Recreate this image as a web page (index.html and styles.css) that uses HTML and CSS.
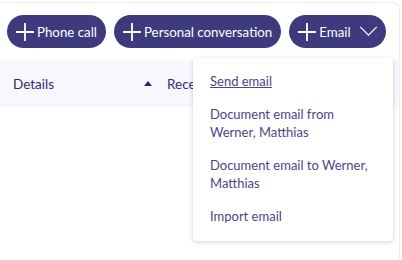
FILE: index.html
```html
<html>
<head>
<meta charset="utf-8" />
<link rel="stylesheet" href="styles.css">
</head>
<body>
    <div class="panel">
        <div class="actions">
            <button class="pill">
                <svg class="plus" viewBox="0 0 20 20"><path d="M10 1V19M1 10H19" /></svg>
                Phone call
            </button>
            <button class="pill">
                <svg class="plus" viewBox="0 0 20 20"><path d="M10 1V19M1 10H19" /></svg>
                Personal conversation
            </button>
            <button class="pill pill-menu">
                <svg class="plus" viewBox="0 0 20 20"><path d="M10 1V19M1 10H19" /></svg>
                Email
                <svg class="chev" viewBox="0 0 20 12"><path d="M1 1L10 10L19 1" /></svg>
            </button>
        </div>
        <div class="table-head">
            <div class="col col-details">Details</div>
            <div class="col col-sort"><span class="tri"></span></div>
            <div class="col">Received</div>
        </div>
    </div>

    <div class="menu">
        <a class="menu-item active" href="#">Send email</a>
        <a class="menu-item" href="#">Document email from Werner, Matthias</a>
        <a class="menu-item" href="#">Document email to Werner, Matthias</a>
        <a class="menu-item" href="#">Import email</a>
    </div>
</body>
</html>
```

FILE: styles.css
```css
body {
    margin: 0px;
    background: #fff;
    font-family: Lato, "Noto Sans", sans-serif;
    color: #2f2c6e;
    width: 402px;
    height: 260px;
    overflow: hidden;
    position: relative;
}
.panel {
    margin: 2px 2px 0 0;
    border-top: 1px solid #ececf4;
    border-right: 1px solid #ececf4;
    border-top-right-radius: 8px;
    height: 258px;
}
.actions {
    display: flex;
    gap: 8px;
    padding: 12px 0 0 7px;
    height: 57px;
    box-sizing: border-box;
}
.pill {
    display: flex;
    align-items: center;
    gap: 2px;
    height: 33px;
    padding: 0 9px 0 8px;
    border: none;
    border-radius: 17px;
    background: #3d3a7d;
    color: #fff;
    font-family: inherit;
    font-size: 13.3px;
}
.plus {
    width: 20px;
    height: 20px;
    fill: none;
    stroke: #fff;
    stroke-width: 1.8;
}
.pill-menu {
    padding-right: 8px;
}
.chev {
    width: 19px;
    height: 11px;
    margin-left: 6px;
    fill: none;
    stroke: #fff;
    stroke-width: 1.3;
}
.table-head {
    display: flex;
    align-items: center;
    height: 47px;
    background: #f7f7fd;
    font-size: 13.5px;
    color: #2f2c6e;
}
.col-details {
    width: 130px;
    padding-left: 13px;
}
.col-sort {
    width: 24px;
    display: flex;
    align-items: center;
}
.tri {
    width: 0;
    height: 0;
    border-left: 4px solid transparent;
    border-right: 4px solid transparent;
    border-bottom: 5px solid #2a2766;
    margin-left: 1px;
}
.menu {
    position: absolute;
    left: 193px;
    top: 58px;
    width: 200px;
    height: 183px;
    box-sizing: border-box;
    padding: 14px 16px 0 17px;
    background: #fff;
    border-radius: 4px;
    box-shadow: 0 1px 4px rgba(40, 40, 80, 0.22);
    display: flex;
    flex-direction: column;
    gap: 15px;
}
.menu-item {
    font-size: 13px;
    line-height: 18px;
    color: #4a4689;
    text-decoration: none;
}
.menu-item.active {
    text-decoration: underline;
}
```
